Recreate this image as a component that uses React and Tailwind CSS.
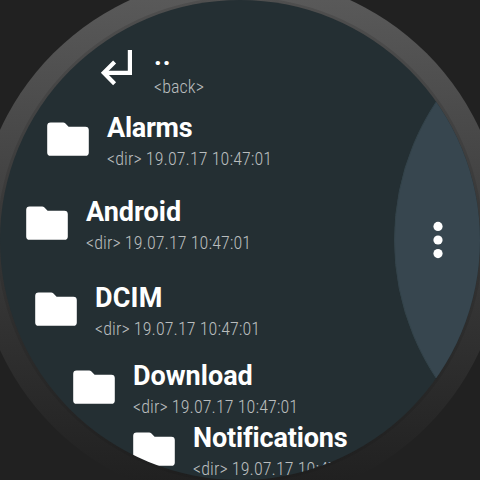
import clsx from 'clsx';

const ENTRIES = [
  { name: '..', info: '<back>', icon: 'back', row: 'h-[72px] pl-[94px]', spacing: 'tracking-[0.8px]' },
  { name: 'Alarms', info: '<dir> 19.07.17 10:47:01', row: 'h-[84px] pl-[47px]', spacing: 'tracking-[-0.25px]' },
  { name: 'Android', info: '<dir> 19.07.17 10:47:01', row: 'h-[86px] pl-[26px]' },
  { name: 'DCIM', info: '<dir> 19.07.17 10:47:01', row: 'h-[78px] pl-[35px]', spacing: 'tracking-[0.2px]' },
  { name: 'Download', info: '<dir> 19.07.17 10:47:01', row: 'h-[62px] pl-[73px]' },
  { name: 'Notifications', info: '<dir> 19.07.17 10:47:01', row: 'h-[62px] pl-[133px]', spacing: 'tracking-[-0.15px]' },
];

function FolderIcon() {
  return (
    <svg width="42" height="34" viewBox="0 0 42 34" className="shrink-0" fill="#fff">
      <path d="M3.6 0.4H16.2Q17.4 0.4 18.2 1.2L21.6 4.7H38.4Q41.8 4.7 41.8 8.1V30.4Q41.8 33.8 38.4 33.8H3.6Q0.2 33.8 0.2 30.4V3.8Q0.2 0.4 3.6 0.4Z" />
    </svg>
  );
}

function BackIcon() {
  return (
    <svg width="42" height="36" viewBox="0 0 42 36" className="shrink-0" fill="none" stroke="#fff" strokeWidth="4.2">
      <path d="M35.9 0V22.8H9.8" />
      <path d="M20.6 11.9L9.8 22.8L20.6 33.7" />
    </svg>
  );
}

function MoreIcon() {
  return (
    <svg width="10" height="38" viewBox="0 0 10 38" fill="#fff">
      <circle cx="5" cy="5.4" r="4.6" />
      <circle cx="5" cy="19" r="4.6" />
      <circle cx="5" cy="32.6" r="4.6" />
    </svg>
  );
}

function Entry({ name, info, icon, row, spacing }) {
  return (
    <li className={clsx('flex shrink-0 items-start gap-[18px]', row)}>
      <div className="shrink-0 pt-[10px]">{icon === 'back' ? <BackIcon /> : <FolderIcon />}</div>
      <div className="whitespace-nowrap">
        <div className={clsx('text-[27px] leading-8 font-bold text-white', spacing)}>{name}</div>
        <div className="mt-[5px] font-['Roboto_Condensed',Roboto,sans-serif] text-[18px] leading-5 font-light tracking-[0.08px] text-[#b9bdbe] [font-stretch:75%]">
          {info}
        </div>
      </div>
    </li>
  );
}

export default function App() {
  return (
    <div className="relative h-[480px] w-[480px] overflow-hidden bg-[#212121] font-[Roboto,sans-serif]">
      {/* Bezel */}
      <div className="absolute -top-6 -left-6 h-[528px] w-[528px] rounded-full bg-linear-to-b from-[#5c5c5c] to-[#1e1e1e]" />
      <div className="absolute -top-[3px] -left-[3px] h-[486px] w-[486px] rounded-full bg-linear-to-b from-[#4f4f4f] to-[#1e1e1e]" />

      {/* Screen */}
      <div className="relative h-[480px] w-[480px] overflow-hidden rounded-full bg-[#242f33]">
        <ul className="flex flex-col pt-10">
          {ENTRIES.map((entry) => (
            <Entry key={entry.name} {...entry} />
          ))}
        </ul>

        {/* Action drawer peeking in from the right */}
        <div className="absolute -top-[10px] left-[394px] h-[500px] w-[500px] rounded-full border border-[#33434a] bg-[#37464f]" />
        <button className="absolute top-[221px] left-[433px]">
          <MoreIcon />
        </button>
      </div>
    </div>
  );
}
